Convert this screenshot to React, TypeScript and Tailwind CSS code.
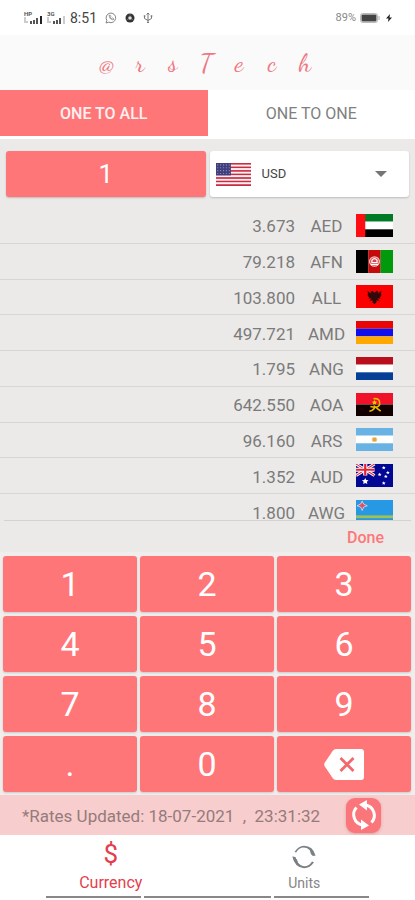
import React, { useState } from 'react';

const flagSize = 'block h-[23px] w-[37px]';

type FlagProps = { code: string };

const star = (x: number, y: number, r: number) => {
  const points: string[] = [];
  for (let i = 0; i < 10; i++) {
    const radius = i % 2 ? r * 0.5 : r;
    const angle = -Math.PI / 2 + (i * Math.PI) / 5;
    points.push(`${x + radius * Math.cos(angle)},${y + radius * Math.sin(angle)}`);
  }
  return points.join(' ');
};

function Bands({ colors }: { colors: string[] }) {
  const h = 24 / colors.length;
  return (
    <>
      {colors.map((c, i) => (
        <rect key={i} y={i * h} width="36" height={h} fill={c} />
      ))}
    </>
  );
}

function FlagArt({ code }: FlagProps) {
  switch (code) {
    case 'AED':
      return (
        <>
          <Bands colors={['#007a25', '#ffffff', '#000000']} />
          <rect width="9" height="24" fill="#ff0d12" />
        </>
      );
    case 'AFN':
      return (
        <>
          <rect width="12" height="24" fill="#000" />
          <rect x="12" width="12" height="24" fill="#c40a0a" />
          <rect x="24" width="12" height="24" fill="#009a0c" />
          <circle cx="18" cy="12" r="4.8" fill="#d5454a" stroke="#f3c4c4" strokeWidth="1.1" />
          <path d="M15.5 13v-2.5q2.5-3 5 0V13zM14.5 15h7" fill="none" stroke="#fff" strokeWidth="1.2" />
        </>
      );
    case 'ALL':
      return (
        <>
          <rect width="36" height="24" fill="#fb0000" />
          <path
            d="M18 8l-2-2-2 1 1 2-4-3 1 3-1 0 1 2-1 0 2 2-1 1 3 0-2 3 3-1 0 2 2 2 2-2 0-2 3 1-2-3 3 0-1-1 2-2-1 0 1-2-1 0 1-3-4 3 1-2-2-1z"
            fill="#32090b"
          />
        </>
      );
    case 'AMD':
      return <Bands colors={['#e90505', '#1010ee', '#ffa800']} />;
    case 'ANG':
      return <Bands colors={['#b90f1c', '#ffffff', '#053f98']} />;
    case 'AOA':
      return (
        <>
          <Bands colors={['#ef1229', '#120000']} />
          <path d="M17 6q7-1 6 6-1 4-9 2M13 19q5-1 5-5l6 5" fill="none" stroke="#e9b800" strokeWidth="1.6" />
          <polygon points={star(18, 10, 2.6)} fill="#f5cc00" />
        </>
      );
    case 'ARS':
      return (
        <>
          <Bands colors={['#68b2e4', '#ffffff', '#68b2e4']} />
          <circle cx="18" cy="12" r="2.2" fill="#e8a235" stroke="#edc785" />
        </>
      );
    case 'AUD':
      return (
        <>
          <rect width="36" height="24" fill="#000894" />
          <path d="M0 0l18 12M18 0L0 12" stroke="#fff" strokeWidth="3" />
          <path d="M0 0l18 12M18 0L0 12" stroke="#e22535" strokeWidth="1" />
          <path d="M9 0v12M0 6h18" stroke="#fff" strokeWidth="4" />
          <path d="M9 0v12M0 6h18" stroke="#e22535" strokeWidth="2.2" />
          <polygon points={star(9, 18, 3.4)} fill="#fff" />
          {[[27, 4], [23, 11], [31, 9], [29, 13], [27, 20]].map(([x, y]) => (
            <polygon key={x + '-' + y} points={star(x, y, 1.9)} fill="#fff" />
          ))}
        </>
      );
    case 'AWG':
      return (
        <>
          <rect width="36" height="24" fill="#2698e4" />
          <rect y="16" width="36" height="3" fill="#a0bf54" />
          <rect y="21" width="36" height="1.5" fill="#e0d24d" />
          <path d="M6 1l1.4 3.2L11 6 7.400 7.400 6 11 4.600 7.400 1 6l3.600-1.800z" fill="#e14e69" stroke="#fff" strokeWidth=".6" />
        </>
      );
    default:
      return (
        <>
          {Array.from({ length: 13 }, (_, i) => (
            <rect key={i} y={(i * 24) / 13} width="36" height={24 / 13} fill={i % 2 ? '#fbeef0' : '#c92b42'} />
          ))}
          <rect width="14.500" height="13" fill="#3f3f7d" />
          {Array.from({ length: 20 }, (_, i) => (
            <circle key={i} cx={1.7 + (i % 5) * 2.8} cy={2 + Math.floor(i / 5) * 3} r=".6" fill="#9294c0" />
          ))}
        </>
      );
  }
}

function Flag({ code }: FlagProps) {
  return (
    <svg className={flagSize} viewBox="0 0 36 24" preserveAspectRatio="none" aria-hidden="true">
      <FlagArt code={code} />
    </svg>
  );
}

const rates = [
  ['3.673', 'AED'],
  ['79.218', 'AFN'],
  ['103.800', 'ALL'],
  ['497.721', 'AMD'],
  ['1.795', 'ANG'],
  ['642.550', 'AOA'],
  ['96.160', 'ARS'],
  ['1.352', 'AUD'],
  ['1.800', 'AWG'],
];

function Signal({ label, strong }: { label: string; strong: boolean }) {
  return (
    <span className="flex h-3 w-[18px] flex-col">
      <span className="h-1 text-[6px] leading-[4px] font-bold text-[#555]">{label}</span>
      <svg className="h-2 w-[18px]" viewBox="0 0 18 8" aria-hidden="true">
        <path d="M1 1v4M0 6h4" stroke="#999" />
        <path d="M6 5h2v3H6zM9 4h2v4H9zM12 2h2v6h-2z" fill="#555" />
        <path d="M16 0h2v8h-2z" fill={strong ? '#222' : '#ccc'} />
      </svg>
    </span>
  );
}

function StatusBar() {
  return (
    <div className="flex h-[35px] items-center bg-white pr-[23px] pl-6 text-[#444]">
      <div className="flex items-center gap-[5px]">
        <Signal label="HP" strong />
        <Signal label="3G" strong={false} />
        <span className="text-[14px] leading-4">8:51</span>
      </div>
      <div className="ml-2 flex items-center gap-2">
        <svg className="size-3" viewBox="0 0 12 12" fill="none" stroke="#777" aria-hidden="true">
          <path d="M1 11l.8-2.600a4.800 4.800 0 1 1 2 1.800z" strokeWidth=".9" />
          <path d="M4 3.500q0 3.500 4 4.500l1-1-1.500-1-.8.6Q5.500 6 5.300 5l.6-.6L5 3z" strokeWidth=".7" />
        </svg>
        <svg className="size-[10px]" viewBox="0 0 10 10" aria-hidden="true">
          <circle cx="5" cy="5" r="4.500" fill="#333" />
          <circle cx="5" cy="5" r="1.800" fill="#ddd" />
          <path d="M5 .8v2M1.500 7l2-1M8.500 7l-2-1" stroke="#888" strokeWidth=".6" />
        </svg>
        <svg className="h-3 w-[10px]" viewBox="0 0 10 12" fill="none" stroke="#777" aria-hidden="true">
          <path d="M5 1v10M3.500 2.500L5 1l1.500 1.500M1.500 4v2.500L5 8.500l3.500-2V4M4 10.500h2" />
          <path d="M.8 4h1.600M7.700 4h1.600" strokeWidth="1.500" />
        </svg>
      </div>
      <div className="ml-auto flex items-center">
        <span className="text-[11px] leading-4 text-[#888]">89%</span>
        <svg className="ml-1 h-[10px] w-5" viewBox="0 0 20 10" aria-hidden="true">
          <rect x=".5" y=".5" width="17" height="9" rx="2" fill="none" stroke="#bbb" />
          <rect x="1.500" y="1.500" width="15" height="7" rx="1" fill="#444" />
          <path d="M19 3v4" stroke="#aaa" />
        </svg>
        <svg className="ml-[6px] h-2 w-[6px]" viewBox="0 0 6 8" aria-hidden="true">
          <path d="M4 0L0 4.500h2.500L2 8l4-4.500H3.500z" fill="#222" />
        </svg>
      </div>
    </div>
  );
}

const keys = ['1', '2', '3', '4', '5', '6', '7', '8', '9', '.', '0'];
const keyClass =
  'flex h-14 items-center justify-center rounded-[3px] bg-[#ff7679] text-[34px] leading-10 text-white shadow-[0_1px_2px_rgba(0,0,0,0.15)]';

export default function App() {
  const [amount, setAmount] = useState('1');
  return (
    <main className="flex w-full flex-col bg-[#ebeae8] font-['Roboto',sans-serif]">
      <StatusBar />
      <h1
        aria-label="@rsTech"
        className="flex h-[55px] items-center justify-center bg-[#fafafa] pr-[3px] text-[26px] leading-8 font-normal text-[#ee7782] font-['Dancing_Script','Liberation_Serif',cursive]"
      >
        {'@rsTech'.split('').map((letter) => (
          <span key={letter} className="w-[33px] text-center">{letter}</span>
        ))}
      </h1>

      <div className="flex bg-white pb-[3px] text-[16px] leading-5">
        <button className="h-[46px] flex-1 bg-[#ff7679] pt-[2px] font-medium text-[#fff0f0]">ONE TO ALL</button>
        <button className="h-[46px] flex-1 pt-[2px] text-[#808080]">ONE TO ONE</button>
      </div>

      <div className="grid grid-cols-2 gap-1 px-[6px] pt-3 pb-[11px]">
        <input
          aria-label="Amount"
          inputMode="decimal"
          value={amount}
          onChange={(e) => setAmount(e.target.value)}
          className="h-[46px] w-full rounded-[3px] bg-[#ff7679] text-center text-[26px] leading-8 text-white shadow-[0_1px_2px_rgba(0,0,0,0.2)] outline-none"
        />
        <label className="flex h-[46px] min-w-0 items-center rounded-[3px] bg-white pl-[6px] shadow-[0_1px_2px_rgba(0,0,0,0.2)]">
          <span className="w-[35px] shrink-0 overflow-hidden"><Flag code="USD" /></span>
          <select aria-label="Base currency" className="ml-[11px] min-w-0 flex-1 appearance-none bg-transparent text-[13px] leading-5 text-[#444] outline-none">
            <option>USD</option>
          </select>
          <svg className="mr-[22px] h-[6px] w-3 shrink-0" viewBox="0 0 12 6" aria-hidden="true">
            <path d="M0 0h12L6 6z" fill="#757575" />
          </svg>
        </label>
      </div>

      <section className="h-[312px] overflow-hidden" aria-label="Exchange rates">
        <table className="h-[322px] w-full border-separate border-spacing-0 text-[17px] leading-5 text-[#7b7b7b]">
          <tbody>
            {rates.map(([value, code]) => (
              <tr key={code}>
                <td className="border-b border-[#d6d6d5] p-0 pt-[2px] text-right">{value}</td>
                <td className="w-[61px] border-b border-[#d6d6d5] p-0 pt-[2px] pl-[2px] text-center">{code}</td>
                <td className="w-[59px] border-b border-[#d6d6d5] p-0"><Flag code={code} /></td>
              </tr>
            ))}
          </tbody>
        </table>
      </section>

      <div className="mx-1 flex h-8 items-center justify-end border-t border-[#d2d2d1] pr-[27px]">
        <button className="pt-[2px] text-[16px] leading-5 font-medium text-[#ff7679]">Done</button>
      </div>

      <div className="grid grid-cols-3 gap-x-[3px] gap-y-1 bg-[#f0eeed] pt-1 pr-1 pb-[3px] pl-[3px]">
        {keys.map((key) => (
          <button key={key} className={keyClass} onClick={() => setAmount((v) => v + key)}>{key}</button>
        ))}
        <button className={keyClass} aria-label="Backspace" onClick={() => setAmount((v) => v.slice(0, -1))}>
          <svg className="h-[31px] w-10" viewBox="0 0 40 31" aria-hidden="true">
            <path d="M12 0h25q3 0 3 3v25q0 3-3 3H12q-2 0-3.200-1.700L.7 17.200q-1-1.700 0-3.400L8.800 1.700Q10 0 12 0z" fill="#fff" />
            <path d="M16.500 9l13 13M29.500 9l-13 13" stroke="#f3686d" strokeWidth="2.800" />
          </svg>
        </button>
      </div>

      <div className="flex h-10 items-center bg-[#f8cdcd] pl-[22px] text-[17px] leading-5 text-[#957b7b]">
        <p className="flex-1 pt-[2px] whitespace-pre">*Rates Updated: 18-07-2021  ,  23:31:32</p>
        <button aria-label="Refresh rates" className="mr-[34px] flex size-[35px] items-center justify-center rounded-[9px] bg-[#fb767a] shadow-[0_1px_3px_rgba(160,60,60,0.3)]">
          <svg className="size-[30px]" viewBox="0 0 30 30" aria-hidden="true">
            <path d="M7.500 7.500A10.500 10.500 0 0 0 13.500 25M22.500 22.500A10.500 10.500 0 0 0 16.500 5" fill="none" stroke="#fff" strokeWidth="3" />
            <path d="M18 0v10.500L10 4.500zM12 19.500V30l8-4.500z" fill="#fff" />
          </svg>
        </button>
      </div>

      <nav className="bg-white">
        <div className="flex h-[60px] px-[14px] text-[14px] leading-5">
          <a href="#currency" className="flex flex-1 flex-col items-center text-[#e43e4c]">
            <span className="h-[38px] text-[26px] leading-[38px]" aria-hidden="true">$</span>
            <span className="text-[16px]">Currency</span>
          </a>
          <a href="#units" className="flex flex-1 flex-col items-center text-[#858585]">
            <svg className="mt-[10px] mb-1 size-6" viewBox="0 0 24 24" aria-hidden="true">
              <path
                d="M2.500 7Q6 1 12 .7 21 1 23.500 10.500L20.500 11Q19 3.500 12 2.600 7 2.500 4.200 7.500zM.5 11.500L3.500 12Q5 20 12 21.200 17 21.400 20 16.500L22 17.200Q18 23 12 23.200 2.500 22.500.5 11.500z"
                fill="#7b8083"
              />
              <path d="M17.500 3.500L23.500 10.500 19 9.500zM.5 11.500L5 14.500 7 20.500Q1.500 17 .5 11.500z" fill="#7b8083" />
            </svg>
            <span>Units</span>
          </a>
        </div>
        <div className="mx-[46px] flex h-[5px] gap-[3px] pt-px">
          <span className="h-[2px] flex-3 bg-[#888]" />
          <span className="h-[2px] flex-4 bg-[#888]" />
          <span className="h-[2px] flex-3 bg-[#888]" />
        </div>
      </nav>
    </main>
  );
}
